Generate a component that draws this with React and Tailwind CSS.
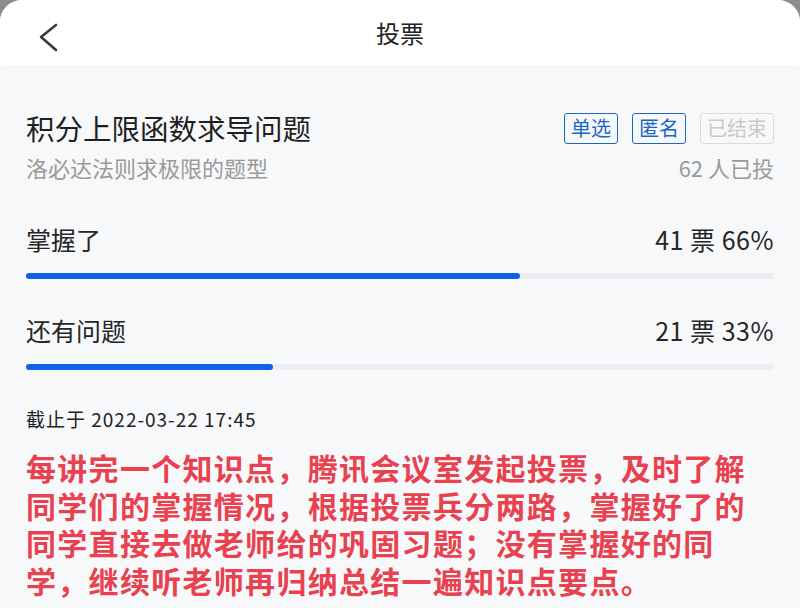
const options = [
  { label: '掌握了', votes: 41, pct: 66 },
  { label: '还有问题', votes: 21, pct: 33 },
];

const note = [
  '每讲完一个知识点，腾讯会议室发起投票，及时了解',
  '同学们的掌握情况，根据投票兵分两路，掌握好了的',
  '同学直接去做老师给的巩固习题；没有掌握好的同',
  '学，继续听老师再归纳总结一遍知识点要点。',
];

function Tag({ children, muted }) {
  return (
    <span
      className={`h-[31px] px-[6px] flex items-center rounded-[3px] border-[1.5px] text-[20px] leading-none ${
        muted ? 'border-[#dcdcdc] text-[#c9c9c9]' : 'border-[#1d67c2] text-[#1d67c2]'
      }`}
    >
      {children}
    </span>
  );
}

export default function App() {
  return (
    <div
      className="w-[800px] h-[608px] bg-[#8c8c8c] overflow-hidden"
      style={{ fontFamily: '"Noto Sans CJK SC", "Noto Sans", sans-serif' }}
    >
      <div className="h-full bg-[#f7f8fa] rounded-t-[22px] overflow-hidden flex flex-col">
        {/* Header */}
        <header className="h-[66px] shrink-0 bg-white relative flex items-center justify-center shadow-[0_6px_10px_-6px_rgba(0,0,0,0.04)]">
          <button className="absolute left-[38px] top-[23px]">
            <svg width="22" height="30" viewBox="0 0 22 30" fill="none">
              <polyline
                points="18,2 3,14 18,27"
                stroke="#3a3a3a"
                strokeWidth="2.6"
                strokeLinecap="round"
                strokeLinejoin="round"
              />
            </svg>
          </button>
          <h1 className="text-[24px] text-[#222] leading-none">投票</h1>
        </header>

        <main className="pl-[26px] pr-[26px] pt-[45px]">
          {/* Title */}
          <div className="flex items-center justify-between h-[34px]">
            <h2 className="text-[28.5px] leading-[34px] text-[#1f1f1f]">积分上限函数求导问题</h2>
            <div className="flex items-center gap-[14px]">
              <Tag>单选</Tag>
              <Tag>匿名</Tag>
              <Tag muted>已结束</Tag>
            </div>
          </div>
          <div className="mt-[9px] flex items-center justify-between text-[22px] leading-[26px] text-[#9a9a9a]">
            <span>洛必达法则求极限的题型</span>
            <span>62 人已投</span>
          </div>

          {/* Options */}
          <div className="mt-[44px] flex flex-col gap-[36px]">
            {options.map((o) => (
              <div key={o.label}>
                <div className="flex items-center justify-between text-[25px] leading-[31px] text-[#262626]">
                  <span>{o.label}</span>
                  <span className="tracking-[0.5px]">
                    {o.votes} 票 {o.pct}%
                  </span>
                </div>
                <div className="mt-[18px] h-[6px] rounded-full bg-[#eceef1]">
                  <div className="h-full rounded-full bg-[#0d63e6]" style={{ width: `${o.pct}%` }} />
                </div>
              </div>
            ))}
          </div>

          <p className="mt-[36px] text-[19px] leading-[25px] tracking-[1px] text-[#222]">截止于 2022-03-22 17:45</p>

          {/* Note */}
          <div className="mt-[18px] text-[30px] leading-[37.5px] font-bold tracking-[1.3px] text-[#e8414f] [text-shadow:0_0_2px_#fff]">
            {note.map((line) => (
              <div key={line} className="whitespace-nowrap">
                {line}
              </div>
            ))}
          </div>
        </main>
      </div>
    </div>
  );
}
